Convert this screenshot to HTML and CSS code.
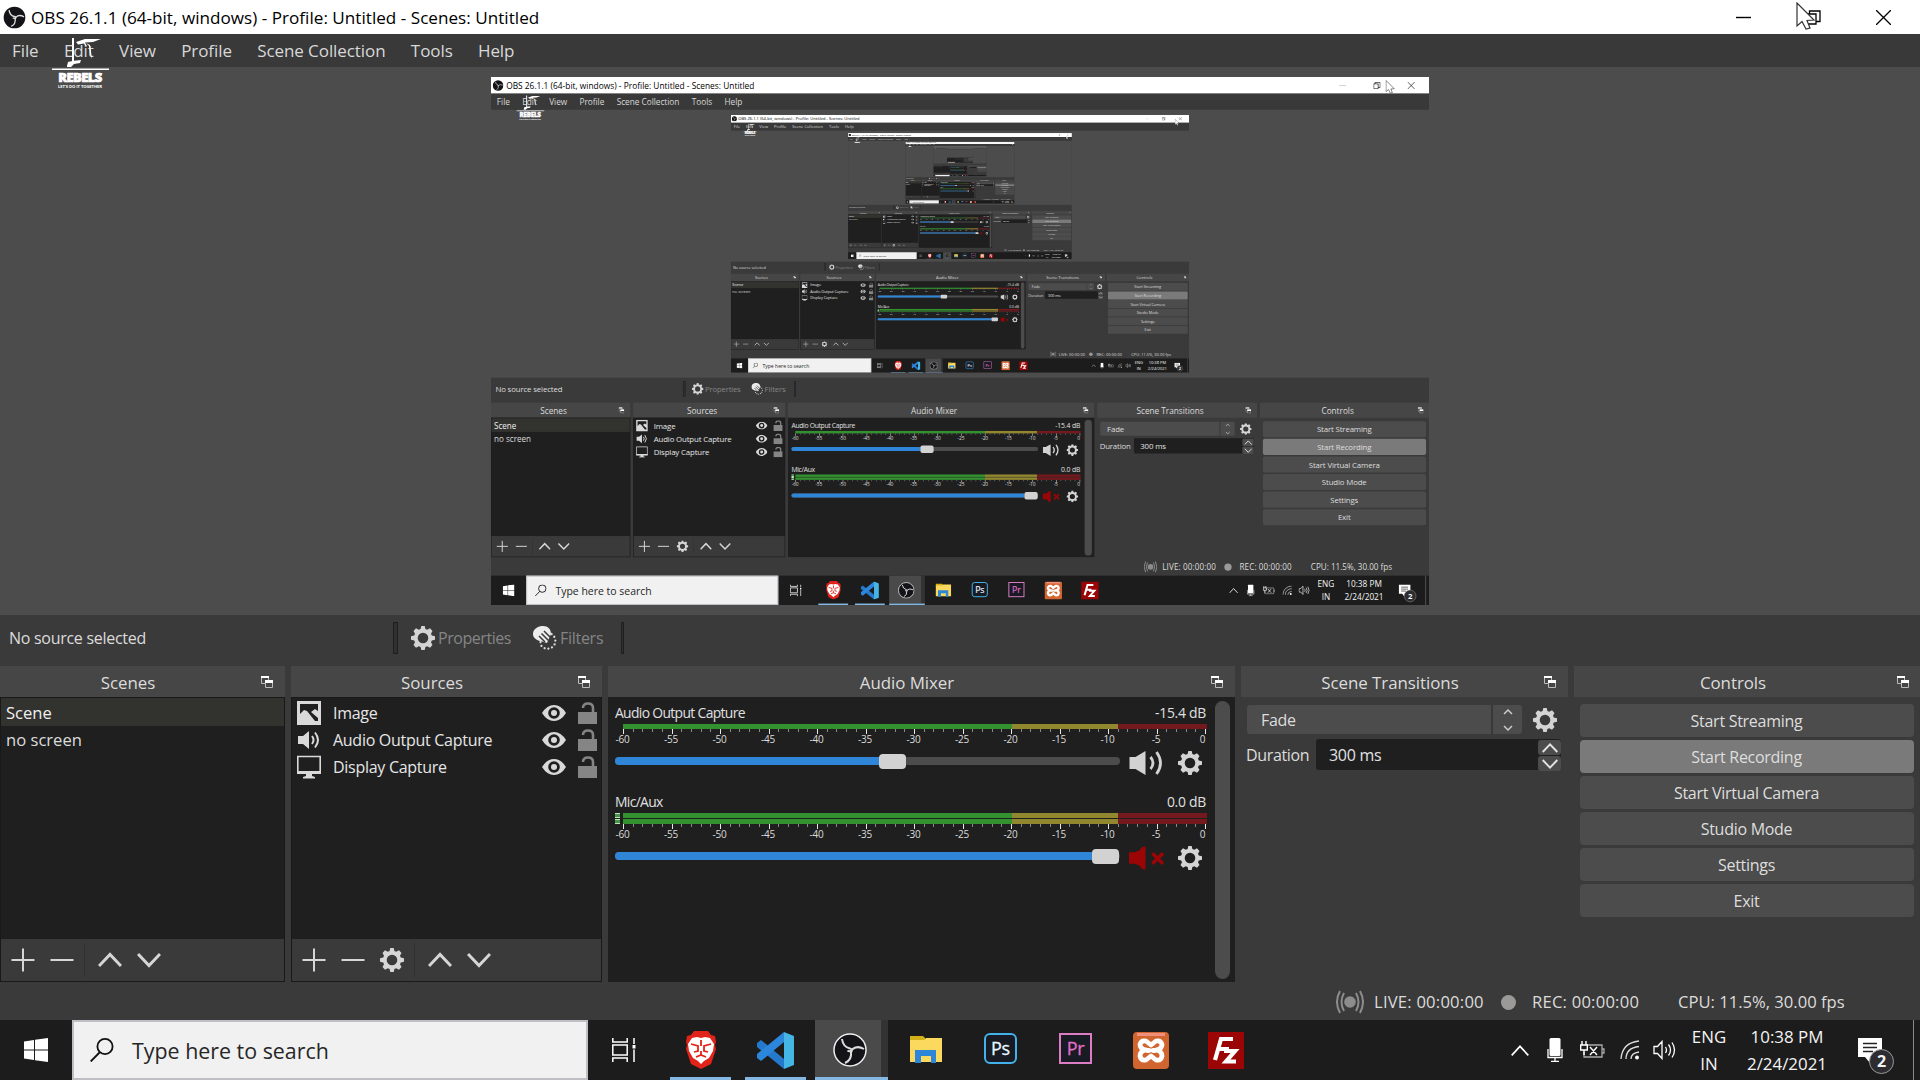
FILE: index.html
```html
<!DOCTYPE html>
<html lang="en">
<head>
<meta charset="utf-8">
<title>OBS 26.1.1</title>
<link rel="stylesheet" href="styles.css">
</head>
<body>
<svg class="sprite" aria-hidden="true">
  <symbol id="i-gear" viewBox="0 0 24 24"><path fill="currentColor" fill-rule="evenodd" d="M10.3 0h3.4l.7 3 1.8.8L19 2.300 21.500 4.900 20 7.700l.8 1.800 3.200.8v3.400l-3.200.8-.8 1.800 1.500 2.800-2.500 2.600-2.800-1.500-1.800.8-.7 3h-3.400l-.7-3-1.800-.8L5 21.700l-2.500-2.600L4 16.300l-.8-1.800L0 13.700v-3.400l3.200-.8L4 7.700 2.500 4.900 5 2.300l2.800 1.500 1.800-.8zM12 6.700a5.300 5.300 0 1 0 0 10.600 5.300 5.300 0 0 0 0-10.600z"/></symbol>
  <symbol id="i-plus" viewBox="0 0 24 24"><path stroke="currentColor" stroke-width="2" d="M12 .5v23M.5 12h23"/></symbol>
  <symbol id="i-minus" viewBox="0 0 24 24"><path stroke="currentColor" stroke-width="2" d="M.5 12h23"/></symbol>
  <symbol id="i-up" viewBox="0 0 24 24"><path fill="none" stroke="currentColor" stroke-width="3" d="M1 18 12 6.500 23 18"/></symbol>
  <symbol id="i-down" viewBox="0 0 24 24"><path fill="none" stroke="currentColor" stroke-width="3" d="M1 6 12 17.500 23 6"/></symbol>
  <symbol id="i-float" viewBox="0 0 12 12"><path fill="none" stroke="#bbb" d="M4 7.500H.5v-7h7V4M4.500 4.500h7v7h-7z"/><path fill="#fff" d="M0 0h8v2H0zM4 4h8v3H4z"/></symbol>
  <symbol id="i-image" viewBox="0 0 24 24"><path fill="currentColor" fill-rule="evenodd" d="M0 0h24v24H0zM3 3v10l4-4 3 1 8 10h3v-3L14 11l4-3 3 2V3z"/></symbol>
  <symbol id="i-speaker" viewBox="0 0 24 24"><path fill="currentColor" d="M1 8h5l6-5v18l-6-5H1z"/><path fill="none" stroke="currentColor" stroke-width="2" d="M15 8q3 4 0 8M18 4.500q6 7.500 0 15"/></symbol>
  <symbol id="i-display" viewBox="0 0 24 24"><path fill="none" stroke="currentColor" stroke-width="1.600" d="M.8 1.500h22.400v16H.8z"/><path fill="currentColor" d="M0 16h24v3H0zM9 19h6v2l3 1v1.500H6V22l3-1z"/></symbol>
  <symbol id="i-eye" viewBox="0 0 24 16"><path fill="currentColor" d="M0 8Q5 0 12 0t12 8q-5 8-12 8T0 8z"/><circle cx="12" cy="8" r="5.800" fill="#1f1f1f"/><circle cx="12" cy="8" r="3" fill="currentColor"/></symbol>
  <symbol id="i-lock" viewBox="0 0 19 22"><path fill="#858585" d="M0 10h19v12H0z"/><path fill="none" stroke="#858585" stroke-width="2.600" d="M5 6q0-4.500 5-4.500T15 6v5"/></symbol>
  <symbol id="i-filters" viewBox="0 0 24 24"><path fill="#ececec" d="M14 17C7 15 1 14 0 9-.500 3 5 0 10 0c5 0 8 3 8 8z"/><path stroke="#3a3a3a" stroke-width="1.500" d="m6 10 6 6M8.500 7.500l7 7M11 5l6.500 6.500"/><path fill="none" stroke="#ddd" stroke-width="2.200" stroke-linecap="round" stroke-dasharray=".1 3.800" d="M18.500 8a8 8 0 0 1 1 13q-6 4-11-1l-1-4"/></symbol>
  <symbol id="i-volume" viewBox="0 0 34 24"><path fill="currentColor" d="M0 6h6l10-6v24L6 18H0z"/><path fill="none" stroke="currentColor" stroke-width="2.800" d="M21 6q5 6 0 12M27 1q8 11 0 22"/></symbol>
  <symbol id="i-muted" viewBox="0 0 36 24"><path fill="#9b0505" d="M0 6h6l5-2 2-3 4-1v24l-4-1-2-3-5-2H0z"/><path stroke="#9b0505" stroke-width="3.600" d="m24 7 11 11M35 7 24 18"/></symbol>
  <symbol id="i-obs" viewBox="0 0 34 34"><circle cx="17" cy="17" r="16" fill="#141318"/><g fill="none" stroke="#ddd" stroke-width="2"><path d="M9 6q1 8 8 9.500 3 1 1 4"/><path d="M31 16q-7-4-12 .5-2 3-4.500 1"/><path d="M12 30q7-3 6-11"/></g></symbol>
  <symbol id="i-search" viewBox="0 0 24 24"><circle cx="15" cy="8.500" r="7.600" fill="none" stroke="#111" stroke-width="1.800"/><path stroke="#111" stroke-width="1.800" d="M10 14 .7 23.500"/></symbol>
</svg>

<div class="screen" id="screen">
  <header class="titlebar">
    <svg class="app-icon"><use href="#i-obs"/></svg>
    <span class="title">OBS 26.1.1 (64-bit, windows) - Profile: Untitled - Scenes: Untitled</span>
    <div class="window-buttons">
      <svg class="minimize" width="15" height="15"><path stroke="#000" stroke-width="1.400" d="M0 7.500h15"/></svg>
      <svg width="15" height="15"><path fill="none" stroke="#000" stroke-width="1.300" d="M1 4h9v10H1zM3.500 4V1H14v10.500h-4"/></svg>
      <svg width="15" height="15"><path stroke="#000" stroke-width="1.300" d="m0 0 15 15M15 0 0 15"/></svg>
    </div>
  </header>
  <nav class="menubar"><span>File</span><span>Edit</span><span>View</span><span>Profile</span><span>Scene Collection</span><span>Tools</span><span>Help</span></nav>

  <div class="watermark">
    <svg width="58" height="34" viewBox="0 0 58 34"><path fill="#fff" d="M20 1h2v24h-2zM24 5l9-3h16l-8 3-8 .5 2 4-2-1-1-2-6 1zM34 6l4 2 2 14-2-5-1-8zM15 29l1-4 4-1 9-1-1 3-6 1-3 3h-4z"/><path fill="#fff" d="M0 31.500h57v1.500H0z"/></svg>
    <b>REBELS</b>
    <small>LET'S DO IT TOGETHER</small>
  </div>

  <main class="preview"><div class="capture"></div></main>

  <section class="context">
    <span class="context-name">No source selected</span>
    <i class="divider"></i>
    <svg class="gear"><use href="#i-gear"/></svg><span class="context-props">Properties</span>
    <svg class="gear"><use href="#i-filters"/></svg><span>Filters</span>
    <i class="divider thin"></i>
  </section>

  <section class="docks">
    <article class="dock">
      <h2><span>Scenes</span><svg><use href="#i-float"/></svg></h2>
      <div class="listbox">
        <ul class="scenes"><li class="selected">Scene</li><li>no screen</li></ul>
        <div class="tools"><svg><use href="#i-plus"/></svg><svg><use href="#i-minus"/></svg><i></i><svg><use href="#i-up"/></svg><svg><use href="#i-down"/></svg></div>
      </div>
    </article>
    <article class="dock">
      <h2><span>Sources</span><svg><use href="#i-float"/></svg></h2>
      <div class="listbox">
        <ul class="sources">
          <li><svg class="kind"><use href="#i-image"/></svg><span>Image</span><svg class="eye"><use href="#i-eye"/></svg><svg class="lock"><use href="#i-lock"/></svg></li>
          <li><svg class="kind"><use href="#i-speaker"/></svg><span>Audio Output Capture</span><svg class="eye"><use href="#i-eye"/></svg><svg class="lock"><use href="#i-lock"/></svg></li>
          <li><svg class="kind"><use href="#i-display"/></svg><span>Display Capture</span><svg class="eye"><use href="#i-eye"/></svg><svg class="lock"><use href="#i-lock"/></svg></li>
        </ul>
        <div class="tools"><svg><use href="#i-plus"/></svg><svg><use href="#i-minus"/></svg><svg><use href="#i-gear"/></svg><i></i><svg><use href="#i-up"/></svg><svg><use href="#i-down"/></svg></div>
      </div>
    </article>
    <article class="dock">
      <h2><span>Audio Mixer</span><svg><use href="#i-float"/></svg></h2>
      <div class="mixer">
        <div class="channels">
          <div class="channel">
            <div class="channel-head"><span>Audio Output Capture</span><span class="db">-15.4 dB</span></div>
            <div class="meter"><i></i></div>
            <svg class="scale"></svg>
            <div class="fader"><div class="track"><i class="level" style="width:264px"></i><i class="knob"></i></div><svg class="volume"><use href="#i-volume"/></svg><svg class="gear"><use href="#i-gear"/></svg></div>
          </div>
          <div class="channel">
            <div class="channel-head"><span>Mic/Aux</span><span class="db">0.0 dB</span></div>
            <div class="meter stereo"><i></i><i></i></div>
            <svg class="scale"></svg>
            <div class="fader"><div class="track"><i class="level" style="width:477px"></i><i class="knob"></i></div><svg class="volume"><use href="#i-muted"/></svg><svg class="gear"><use href="#i-gear"/></svg></div>
          </div>
        </div>
        <div class="scrollbar"></div>
      </div>
    </article>
    <article class="dock">
      <h2><span>Scene Transitions</span><svg><use href="#i-float"/></svg></h2>
      <div class="transitions">
        <div class="row"><div class="combo"><span>Fade</span><b><svg width="10" height="24" viewBox="0 0 10 24"><path fill="none" stroke="#ccc" stroke-width="1.500" d="M1 6l4-4 4 4M1 18l4 4 4-4"/></svg></b></div><svg class="gear"><use href="#i-gear"/></svg></div>
        <div class="row duration"><span>Duration</span><div class="spin"><span>300 ms</span><div class="spin-buttons"><b><svg><use href="#i-up"/></svg></b><b><svg><use href="#i-down"/></svg></b></div></div></div>
      </div>
    </article>
    <article class="dock">
      <h2><span>Controls</span><svg><use href="#i-float"/></svg></h2>
      <div class="controls"><button>Start Streaming</button><button class="hover">Start Recording</button><button>Start Virtual Camera</button><button>Studio Mode</button><button>Settings</button><button>Exit</button></div>
    </article>
  </section>

  <footer class="status">
    <svg width="28" height="24" viewBox="0 0 28 24"><circle cx="14" cy="12" r="5.800" fill="#8c8c8c"/><path fill="none" stroke="#8c8c8c" stroke-width="2" d="M8 3q-5 9 0 18M20 3q5 9 0 18M4 1q-6 11 0 22M24 1q6 11 0 22"/></svg>
    <span class="live">LIVE: 00:00:00</span><i class="dot"></i><span class="rec">REC: 00:00:00</span><span class="cpu">CPU: 11.5%, 30.00 fps</span>
  </footer>

  <footer class="taskbar">
    <div class="start"><svg width="24" height="24" viewBox="0 0 24 24"><path fill="#fff" d="M0 3.500 10 2v9.500H0zM11 1.800 24 0v11.500H11zM0 12.500h10V22L0 20.500zM11 12.500h13V24l-13-1.800z"/></svg></div>
    <div class="search"><svg width="24" height="24"><use href="#i-search"/></svg><span>Type here to search</span></div>
    <div class="taskview"><svg width="24" height="24" viewBox="0 0 24 24"><path fill="none" stroke="#fff" stroke-width="1.500" d="M.8 0v4h14.400V0M.8 24v-4h14.400v4M.8 7h14.400v10H.8zM22 0v6M22 11.500V24"/><path fill="#fff" d="M20.500 7h3v3.500h-3z"/></svg></div>
    <div class="apps">
      <div class="app running"><svg width="32" height="38" viewBox="0 0 32 38"><path fill="#e2231a" d="m9 0h14l3 4 4 1 1 6-1 3 1 4-5 15-10 5-10-5L1 18l1-4-1-3 1-6 4-1z"/><path fill="#fff" d="m7 7 5-1 4 1 4-1 5 1 4 6-1 7-4 7-5 3-3 3-3-3-5-3-4-7-1-7z"/><path fill="none" stroke="#e2231a" stroke-width="1.800" d="m6 13 7 2v5l-4 1M26 13l-7 2v5l4 1M11 26l5-2 5 2M16 9v6M16 20v4"/></svg></div>
      <div class="app running"><svg width="37" height="37" viewBox="0 0 37 37"><path fill="#2479cc" d="m0 11 4-3 23 19v10L0 15z"/><path fill="#2c86dc" d="M27 0v10L4 29l-4-3v-4z"/><path fill="#45b5e6" d="m27 0 10 4v29l-10 4z"/></svg></div>
      <div class="app active"><svg width="34" height="34" viewBox="0 0 34 34"><use href="#i-obs"/><circle cx="17" cy="17" r="16" fill="none" stroke="#eee" stroke-width="1.500"/></svg></div>
      <div class="app"><svg width="32" height="28" viewBox="0 0 32 28"><path fill="#d4b018" d="M0 0h13l2 2v4H0z"/><path fill="#fbd95f" d="M0 4h14l2-2h16v24H0z"/><path fill="#2c87d8" d="M5 14h21v13h-5v-7H11v7H5z"/></svg></div>
      <div class="app"><div class="tile ps">Ps</div></div>
      <div class="app"><div class="tile pr">Pr</div></div>
      <div class="app"><svg width="36" height="37" viewBox="0 0 36 37"><rect width="36" height="37" rx="4" fill="#d06530"/><path stroke="#f0907c" stroke-width="3" d="M4 2.500h28"/><path fill="none" stroke="#fff" stroke-width="4.800" stroke-linejoin="round" stroke-linecap="round" d="M13 18q-6-1-6-5.500Q8 8 13 9l5 4 5-4q5-1 6 3.500 0 4.500-6 5.500 6 1 6 6-1 5-6 4l-5-4-5 4q-5 1-6-4 0-5 6-6M14 18.500h2M20 18.500h2"/></svg></div>
      <div class="app"><svg width="36" height="37" viewBox="0 0 36 37"><path fill="#9c0505" d="M0 0h36v37H0z"/><path fill="none" stroke="#fff" stroke-width="4.200" d="M25 7H13L7 28M9 17h12M16 19h11L18 29.500h10"/></svg></div>
    </div>
    <div class="tray">
      <svg width="18" height="11"><path fill="none" stroke="#fff" stroke-width="1.700" d="m.7 10.300 8.300-9 8.300 9"/></svg>
      <svg class="mic" width="16" height="24"><rect x="2.500" width="11" height="18" rx="1.500" fill="#fff"/><path fill="none" stroke="#fff" stroke-width="1.300" d="M1 11v8.500h14V11M8 20v3M4 23.300h8"/></svg>
      <svg class="battery" width="25" height="18"><path fill="none" stroke="#aaa" stroke-width="1.300" d="M7 4h15v12H4v-5M22 8h2v4h-2"/><path fill="none" stroke="#fff" stroke-width="1.400" d="M2 0v4M6 0v4M.7 4h6.600v5H.7zM4 9v5M10 6l7 8M17 6l-7 8"/></svg>
      <svg class="wifi" width="20" height="20"><path fill="none" stroke="#ddd" stroke-width="1.300" d="M1 19Q2 3 19 1M6 19Q6 8 19 6.500M11 19q0-6 8-7"/><circle cx="17" cy="17.500" r="2" fill="#fff"/></svg>
      <svg class="sound" width="24" height="20"><path fill="none" stroke="#fff" stroke-width="1.300" d="M1 6.500h3.500L9 1.500v17l-4.500-5H1zM12.500 7q2 3 0 6M15.500 4.500q4 5.500 0 11M19 2.500q5 7.500 0 15"/></svg>
      <div class="lang"><span>ENG</span><span>IN</span></div>
      <div class="clock"><span>10:38 PM</span><span>2/24/2021</span></div>
      <div class="notes"><svg width="25" height="25"><path fill="#fff" d="M0 0h24v19H12v6l-5-6H0z"/><path stroke="#222" stroke-width="1.400" d="M5 5.500h14M5 9.500h14M5 13.500h10"/></svg><b>2</b></div>
      <i class="show-desktop"></i>
    </div>
  </footer>

  <svg class="cursor" width="20" height="28" viewBox="0 0 20 28"><path fill="#fff" stroke="#333" stroke-width="1.200" d="M1 1v23l5-4.500 4 7.500 4-1-3-7.500 7-.5z"/></svg>
</div>
<script src="main.js"></script>
</body>
</html>
```
FILE: main.js
```js
const NS = 'http://www.w3.org/2000/svg';

// dB scale below every volume meter: a tick for each dB, a label for every fifth.
document.querySelectorAll('.scale').forEach((svg) => {
  for (let db = -60; db <= 0; db++) {
    const x = 8.5 + ((db + 60) * 582) / 60;
    const major = db % 5 === 0;
    const tick = document.createElementNS(NS, 'rect');
    tick.setAttribute('x', Math.round(x - 0.5));
    tick.setAttribute('width', 1);
    tick.setAttribute('height', major ? 5 : 3);
    tick.setAttribute('fill', major ? '#e8e8e8' : '#888');
    svg.append(tick);
    if (major) {
      const label = document.createElementNS(NS, 'text');
      label.setAttribute('x', db === 0 ? x - 3 : x - 1);
      label.setAttribute('y', 13.5);
      label.textContent = db;
      svg.append(label);
    }
  }
});

// The captured display shows this same window again, each time with an older pointer position.
const LEVELS = 7;
const FIRST_WITHOUT_TEXT = 5; // letters are smaller than a pixel from here on
const pointer = [[1796, 2], [1831, 6], [1860, 18], [1870, 26]];

const root = document.getElementById('screen');
const pristine = root.cloneNode(true);
pristine.removeAttribute('id');

function clearText(node) {
  const walker = document.createTreeWalker(node, NodeFilter.SHOW_TEXT);
  const found = [];
  while (walker.nextNode()) found.push(walker.currentNode);
  found.forEach((text) => text.remove());
}

let host = root;
for (let depth = 0; depth < LEVELS; depth++) {
  const [x, y] = pointer[Math.min(depth, pointer.length - 1)];
  host.style.setProperty('--px', x + 'px');
  host.style.setProperty('--py', y + 'px');
  if (depth === LEVELS - 1) break;
  const copy = pristine.cloneNode(true);
  if (depth + 1 >= FIRST_WITHOUT_TEXT) clearText(copy);
  host.querySelector('.capture').append(copy);
  host = copy;
}
```
FILE: styles.css
```css
* { box-sizing: border-box; }
body { margin: 0; overflow: hidden; background: #3a3a3a; }
.sprite { position: absolute; width: 0; height: 0; }
ul, h2 { margin: 0; padding: 0; list-style: none; font-weight: 400; }
svg { flex: none; display: block; }
span { white-space: nowrap; }

.screen {
  position: relative;
  display: flex;
  flex-direction: column;
  width: 1920px;
  height: 1080px;
  overflow: hidden;
  background: #3a3a3a;
  color: #dcdcdc;
  font: 16px/20px "Open Sans", "Noto Sans", sans-serif;
  letter-spacing: -.28px;
}

.titlebar { display: flex; flex: none; align-items: center; height: 34px; padding: 0 12px 0 3px; background: #fff; color: #000; }
.app-icon { width: 23px; height: 23px; }
.title { margin-left: 5px; padding-top: 1px; font-size: 17.1px; letter-spacing: .02px; }
.window-buttons { display: flex; gap: 55px; margin-left: auto; padding-right: 17px; }
.capture .minimize { opacity: .25; }

.menubar { display: flex; flex: none; align-items: center; gap: 25.3px; height: 33px; padding: 0 12px; background: #393939; color: #d8d8d8; font-size: 17px; letter-spacing: -.08px; }

.watermark { position: absolute; left: 52px; top: 37px; z-index: 2; width: 58px; color: #fff; text-align: center; }
.watermark b { display: block; font: 900 13px/13px "Open Sans", sans-serif; letter-spacing: -.6px; -webkit-text-stroke: .7px #fff; }
.watermark small { display: block; font: 700 4.2px/6px "Open Sans", sans-serif; letter-spacing: -.1px; }
.watermark b, .watermark small { margin-left: -2px; }

.preview { display: flex; flex: none; justify-content: center; height: 548px; padding-top: 10px; background: #4c4c4c; }
.capture { width: 938px; height: 528px; overflow: hidden; }
.capture > .screen { transform: scale(.48854, .48889); transform-origin: 0 0; }

.context { display: flex; flex: none; align-items: center; height: 51px; padding: 0 0 6px 9px; color: #858585; }
.context-name { width: 384px; color: #dcdcdc; }
.divider { width: 5px; height: 32px; margin-right: 13px; border: 1px solid #1f1f1f; background: #303030; }
.divider.thin { width: 3px; margin: 0 0 0 18px; }
.gear { width: 24px; height: 24px; color: #d4d4d4; }
.context .gear { margin-right: 3px; }
.context-props { width: 95px; letter-spacing: -.45px; }

.docks { display: grid; flex: none; grid-template-columns: 285px 311px 627px 327px 346px; gap: 6px; height: 316px; }
.dock { display: flex; flex-direction: column; min-width: 0; }
.dock h2 { display: flex; align-items: center; height: 31px; padding: 0 12px 0 0; background: #464646; font-size: 16.900px; letter-spacing: -.05px; }
.dock h2 span { flex: 1; padding: 2px 5px 0 0; text-align: center; }
.dock h2 svg { width: 12px; height: 14px; }
.dock:nth-child(5) h2 { padding-right: 11px; }

.listbox { display: flex; flex: 1; flex-direction: column; border: 1px solid #191919; background: #1f1f1f; }
.listbox ul { flex: 1; }
.scenes li { height: 27.500px; padding: 5px 5px 0; font-size: 16.600px; letter-spacing: 0; }
.scenes li:nth-child(2) { padding-top: 4px; }
.scenes .selected { background: #32322f; color: #f0f0f0; }
.sources { padding-top: 1px; }
.sources li { display: flex; align-items: center; height: 27px; padding: 0 4px 0 5px; color: #e6e6e6; }
.sources .kind { width: 24px; height: 24px; margin-right: 12px; color: #d9d9d9; }
.sources span { flex: 1; }
.sources .eye { width: 24px; height: 16px; margin-right: 12px; color: #d9d9d9; }
.sources .lock { width: 19px; height: 22px; }
.tools { display: flex; align-items: center; gap: 15px; height: 42px; padding: 0 10px 1px; background: #3a3a3a; color: #d6d6d6; }
.tools svg { width: 24px; height: 24px; }
.tools i { width: 1px; height: 34px; margin: 0 -2px 0 -5px; background: #303030; }

.mixer { display: flex; flex: 1; justify-content: space-between; padding: 3px 5px 3px 7px; background: #1f1f1f; }
.channels { width: 593px; padding-top: 4px; }
.channel { height: 89px; }
.channel-head { display: flex; justify-content: space-between; height: 20px; padding-right: 2px; color: #e0e0e0; font-size: 13.900px; line-height: 18px; letter-spacing: -.66px; }
.channel-head .db { letter-spacing: -.25px; }
.meter { display: flex; flex-direction: column; gap: 2px; padding: 0 1px 0 8px; }
.meter i { height: 5px; background: linear-gradient(90deg, #33912f 0 389px, #91872f 389px 495px, #741a1f 495px); }
.meter.stereo { position: relative; gap: 1px; }
.meter.stereo::before { content: ""; position: absolute; left: 0; top: 0; width: 5px; height: 11px; background: linear-gradient(#b8e4b8 0 1px, #4a934a 1px 4px, #b8e4b8 4px 5px, #1f1f1f 5px 6px, #b8e4b8 6px 7px, #4a934a 7px 10px, #b8e4b8 10px); }
.scale { width: 593px; height: 19px; overflow: visible; }
.scale text { fill: #dcdcdc; font: 10px "Open Sans", sans-serif; letter-spacing: -.3px; text-anchor: middle; }
.fader { display: flex; align-items: center; height: 24px; margin-top: 3px; }
.track { display: flex; align-items: center; width: 505px; height: 8px; margin: -4px 9px 0 0; border-radius: 4px; background: #4c4c4c; }
.level { height: 8px; border-radius: 4px 0 0 4px; background: #2f86d8; }
.knob { width: 27px; height: 15px; border-radius: 4px; background: #d3d2d3; }
.volume { width: 35px; height: 24px; color: #d3d2d3; }
.fader .gear { margin-left: 14px; }
.scrollbar { width: 15px; margin-top: 1px; border-radius: 8px; background: #4c4c4c; }

.transitions { padding: 8px 6px; }
.row { display: flex; align-items: center; justify-content: space-between; }
.combo { display: flex; align-items: center; width: 275px; height: 29px; padding-left: 14px; border-radius: 3px; background: #4c4c4c; }
.combo span { flex: 1; }
.combo b { display: flex; align-items: center; justify-content: center; width: 31px; height: 29px; border-left: 2px solid #383838; }
.row .gear { margin-right: 5px; }
.duration { height: 31px; margin-top: 5px; padding-right: 1px; }
.duration > span { margin-left: -1px; letter-spacing: -.35px; }
.spin { display: flex; align-items: center; width: 245px; height: 31px; padding: 1px 0 0 13px; border-radius: 3px; background: #1f1f1f; color: #e2e2e2; }
.spin > span { flex: 1; }
.spin-buttons { display: grid; gap: 1px; width: 23px; }
.spin-buttons b { display: grid; place-items: center; height: 15px; border-radius: 3px; background: #4c4c4c; }
.spin-buttons svg { width: 16px; height: 16px; }

.controls { display: grid; gap: 3px; padding: 7px 6px; }
.controls button { height: 33px; padding: 1px 1px 0 0; border: 0; border-radius: 4px; background: #4c4c4c; color: #dedede; font: inherit; letter-spacing: -.28px; }
.controls .hover { background: #7a7a7a; }

.status { display: flex; flex: none; align-items: center; height: 38px; padding-left: 1336px; padding-top: 2px; font-size: 16.600px; letter-spacing: 0; }
.live { width: 117px; margin-left: 10px; }
.dot { width: 15px; height: 15px; margin: 0 16px 0 10px; border-radius: 50%; background: #9b9a98; }
.live, .rec { letter-spacing: .22px; }
.rec { width: 146px; }

.taskbar { display: flex; flex: none; height: 60px; background: #1c1c1c; color: #f4f4f4; }
.start { width: 72px; padding: 18px 24px; }
.search { display: flex; align-items: center; gap: 18px; width: 516px; padding-left: 16px; border: 2px solid #bfbec4; background: #f1f1f1; color: #262626; font-size: 21.400px; letter-spacing: 0; }
.search span { padding-top: 2px; }
.taskview { width: 75px; padding: 18px 24px; }
.apps { display: grid; grid-template-columns: repeat(8, 75px); }
.app { display: grid; place-items: center; width: 73px; margin-left: 1px; height: 60px; }
.app.running { width: 61px; margin-left: 7px; border-bottom: 3px solid #84b7e2; padding-top: 3px; }
.app.active { margin-left: 2px; background: linear-gradient(90deg, #4a4a4a 66px, #333 66px); border-bottom: 3px solid #84b7e2; padding: 2px 3px 0 0; }
.tile { width: 33px; height: 31px; margin-top: -3px; border: 2px solid #43b1ea; border-radius: 6px; background: #181a24; color: #e8f6ff; font-size: 18px; line-height: 26px; text-align: center; -webkit-text-stroke: .3px currentColor; }
.tile.pr { border-color: #dc7cc4; border-radius: 0; color: #e06fc9; }
.tray { display: flex; align-items: center; margin-left: auto; font-size: 16.900px; letter-spacing: 0; }
.tray .mic { margin-left: 18px; }
.tray .battery { margin-left: 17px; }
.tray .wifi { margin-left: 15px; }
.tray .sound { margin-left: 13px; }
.lang, .clock { display: grid; gap: 7px; text-align: center; }
.lang { width: 36px; margin-left: 14px; }
.clock { width: 84px; margin-left: 18px; }
.notes { position: relative; margin-left: 29px; }
.notes b { position: absolute; left: 11px; top: 11px; width: 25px; height: 25px; border: 1px solid #999; border-radius: 50%; background: #2c2c31; font: 700 16px/23px "Open Sans", sans-serif; text-align: center; }
.show-desktop { width: 1px; height: 60px; margin: 0 6px 0 30px; background: #8a8a8a; }
.cursor { position: absolute; left: var(--px); top: var(--py); }
```
